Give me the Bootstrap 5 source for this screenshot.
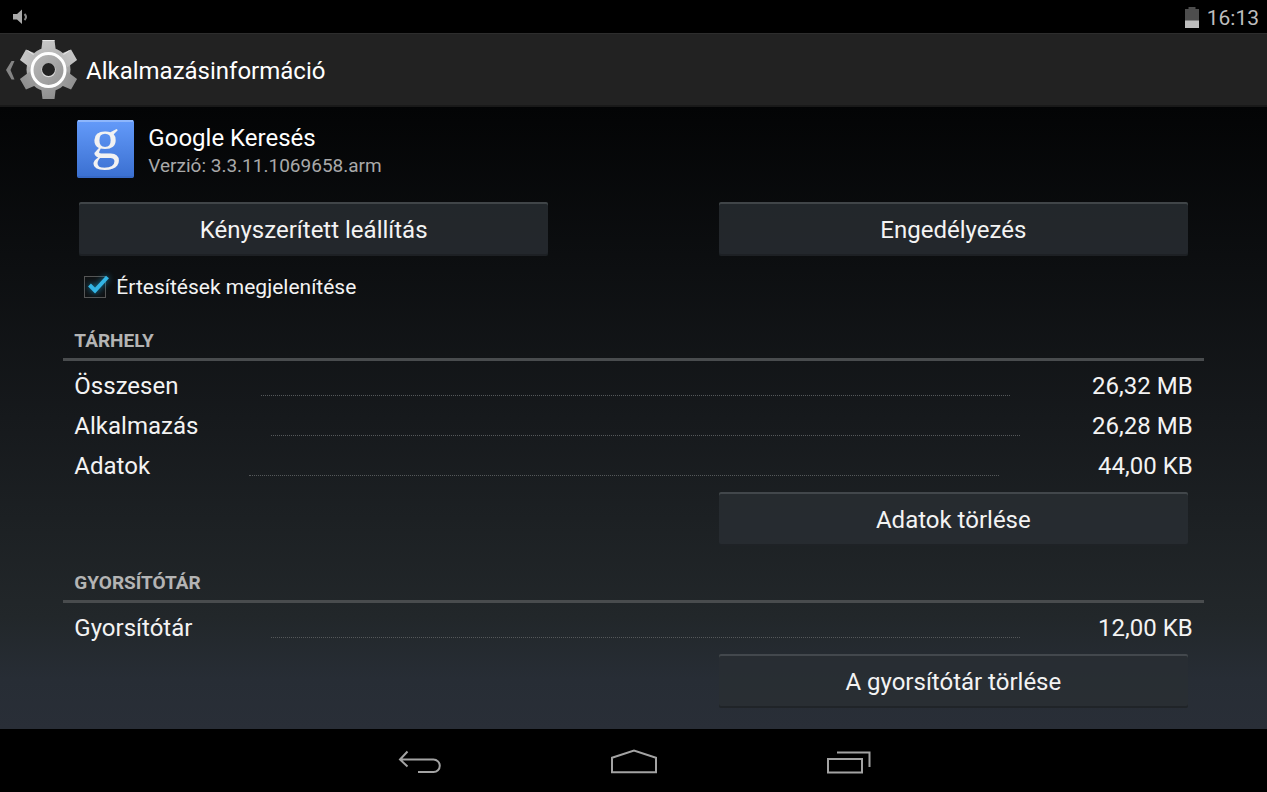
<!DOCTYPE html>
<html lang="hu" data-bs-theme="dark">
<head>
<meta charset="utf-8">
<meta name="viewport" content="width=device-width, initial-scale=1">
<title>Alkalmazásinformáció</title>
<link href="https://cdn.jsdelivr.net/npm/bootstrap@5.3.0/dist/css/bootstrap.min.css" rel="stylesheet">
<style>
  body { font-family: Roboto, "Noto Sans", sans-serif; font-size: 24px; line-height: 32px; color: #f3f3f3; background: #000; }
  button { font-family: inherit; }
  .status-bar { height: 33px; padding: 2px 8px 0 12px; color: #bebebe; font-size: 21px; line-height: 28px; }
  .action-bar { height: 74px; padding-left: 4px; background: #222; border-top: 1px solid #2d2d2d; border-bottom: 2px solid #191919; }
  .up-link { color: inherit; }
  .screen-title { padding: 3px 0 0 8px; font-size: 24px; line-height: 32px; font-weight: 400; }
  .app-main { padding: 13px 5% 21px; background: linear-gradient(#030405, #16191c 50%, #22272a 82%, #272d35 92%, #292e37); }
  .app-head { padding: 0 14px; gap: 14px; }
  .app-name { padding-top: 2px; font-size: 24px; line-height: 32px; font-weight: 400; }
  .app-version { font-size: 19px; line-height: 24px; color: #a9a9a9; }
  .app-icon { overflow: visible; }
  .button-row { padding: 0 16px; gap: 171px; }
  .btn-holo { height: 54px; padding: 2px 0 0; border: 0; border-radius: 2px; color: #f3f3f3; font-size: 24px; line-height: 32px; background: rgba(41,46,51,.8); box-shadow: inset 0 2px rgba(112,118,122,.38), inset 0 -2px rgba(20,22,24,.4); }
  .btn-holo:hover, .btn-holo:active { background: #2e5f70; color: #fff; }
  .check-row { height: 66px; padding: 0 0 4px 21px; gap: 10px; font-size: 21px; }
  .check-box { width: 22px; height: 22px; }
  .check-box input { appearance: none; width: 22px; height: 22px; margin: 0; border: 1px solid #555; background: #101214; }
  .check-box svg { left: 0; top: -4px; pointer-events: none; overflow: visible; filter: drop-shadow(0 0 3px #1784ad); }
  .check-box input:not(:checked) + svg { display: none; }
  .section-title { height: 39px; margin: 0; padding: 3px 11px 0; font-size: 19px; line-height: 32px; font-weight: 700; color: #b4b4b4; border-bottom: 3px solid #494c4e; }
  .size-list { margin: 0; padding: 5px 11px 6px; }
  .size-list dt { font-weight: 400; }
  .size-line { height: 40px; }
  .leader { width: 67%; margin-top: 19px; border-top: 1px dotted #55585a; }
  .section-gap { margin-top: 18px; }
  .nav-keys { height: 63px; background: #000; }
  .nav-keys button { width: 214px; color: #a3a3a3; }
</style>
</head>
<body class="min-vh-100 d-flex flex-column">
  <div class="status-bar d-flex align-items-center justify-content-between">
    <svg width="18" height="18" viewBox="0 0 18 18" aria-hidden="true"><path fill="#aaa" d="M1 5h4l5-4.500v14.500l-5-4.500H1z"/><path d="M12.500 5q3 3 0 6" fill="none" stroke="#888" stroke-width="2"/></svg>
    <div class="d-flex align-items-center gap-2">
      <svg width="14" height="21" viewBox="0 0 14 21" aria-hidden="true"><path fill="#4d4d4d" d="M0 2h3.500V0h7v2H14v12H0z"/><path fill="#bdbdbd" d="M0 13.500h14V21H0z"/></svg>
      <span>16:13</span>
    </div>
  </div>

  <header class="action-bar d-flex align-items-center">
    <a href="#" class="up-link d-flex align-items-center text-decoration-none">
      <svg width="74" height="64" viewBox="4 38 74 64" aria-hidden="true">
        <defs>
          <linearGradient id="metal" gradientUnits="userSpaceOnUse" x1="40" y1="40" x2="56" y2="99"><stop stop-color="#c8c8c8"/><stop offset="1" stop-color="#8e8e8e"/></linearGradient>
          <linearGradient id="disc" x2="1" y2="1"><stop stop-color="#b9b9b9"/><stop offset="1" stop-color="#939393"/></linearGradient>
        </defs>
        <path d="M14.500 61h-3L6 70l5.500 9.500h3L10.500 70z" fill="#858585"/>
        <g fill="url(#metal)">
          <circle cx="48.500" cy="69.500" r="22"/>
          <path d="M42.500 40h12l1.500 12h-15zM42.500 99h12l1.500-12h-15z"/>
          <path d="M42.500 40h12l1.500 12h-15zM42.500 99h12l1.500-12h-15z" transform="rotate(60 48.500 69.500)"/>
          <path d="M42.500 40h12l1.500 12h-15zM42.500 99h12l1.500-12h-15z" transform="rotate(-60 48.500 69.500)"/>
        </g>
        <path d="M42.500 40.500h12M27.500 50.500l6 4M69.500 50.500l-6 4" stroke="#e8e8e8" stroke-width="1" fill="none"/>
        <circle cx="48.500" cy="70" r="16.500" fill="url(#disc)" stroke="#fff" stroke-width="3"/>
        <circle cx="48.500" cy="70.300" r="7" fill="#ddd"/>
        <circle cx="48.500" cy="69.500" r="6.500" fill="#222"/>
      </svg>
      <h1 class="screen-title m-0">Alkalmazásinformáció</h1>
    </a>
  </header>

  <main class="app-main flex-grow-1">
    <div class="app-head d-flex align-items-center">
      <svg class="app-icon" width="57" height="58" viewBox="0 0 57 58" aria-hidden="true">
        <defs><linearGradient id="blue" x2="0" y2="1"><stop stop-color="#649bfa"/><stop offset="1" stop-color="#3a6fd0"/></linearGradient></defs>
        <rect width="57" height="58" rx="2" fill="url(#blue)"/>
        <path d="M1 1h55" stroke="#8db6fc" stroke-width="2"/>
        <path d="M1 57h55" stroke="#3263bb" stroke-width="1"/>
        <text x="14" y="38" font-family="Liberation Serif, serif" font-size="58" fill="#f2f2f2">g</text>
      </svg>
      <div>
        <h2 class="app-name m-0">Google Keresés</h2>
        <div class="app-version">Verzió: 3.3.11.1069658.arm</div>
      </div>
    </div>

    <div class="button-row d-flex mt-4">
      <button type="button" class="btn btn-holo w-100">Kényszerített leállítás</button>
      <button type="button" class="btn btn-holo w-100">Engedélyezés</button>
    </div>

    <div class="check-row d-flex align-items-center">
      <span class="check-box position-relative d-flex">
        <input type="checkbox" id="notify" checked>
        <svg class="position-absolute" width="28" height="24" viewBox="0 0 28 24" aria-hidden="true"><path d="M5.500 13l5.500 5.500L23.500 5" fill="none" stroke="#33b5e5" stroke-width="4"/></svg>
      </span>
      <label for="notify">Értesítések megjelenítése</label>
    </div>

    <section>
      <h3 class="section-title">TÁRHELY</h3>
      <dl class="size-list">
        <div class="size-line d-flex align-items-center justify-content-between"><dt>Összesen</dt><span class="leader"></span><dd class="m-0">26,32 MB</dd></div>
        <div class="size-line d-flex align-items-center justify-content-between"><dt>Alkalmazás</dt><span class="leader"></span><dd class="m-0">26,28 MB</dd></div>
        <div class="size-line d-flex align-items-center justify-content-between"><dt>Adatok</dt><span class="leader"></span><dd class="m-0">44,00 KB</dd></div>
      </dl>
      <div class="button-row d-flex">
        <span class="w-100"></span>
        <button type="button" class="btn btn-holo w-100">Adatok törlése</button>
      </div>
    </section>

    <section class="section-gap">
      <h3 class="section-title">GYORSÍTÓTÁR</h3>
      <dl class="size-list">
        <div class="size-line d-flex align-items-center justify-content-between"><dt>Gyorsítótár</dt><span class="leader"></span><dd class="m-0">12,00 KB</dd></div>
      </dl>
      <div class="button-row d-flex">
        <span class="w-100"></span>
        <button type="button" class="btn btn-holo w-100">A gyorsítótár törlése</button>
      </div>
    </section>
  </main>

  <nav class="nav-keys d-flex justify-content-center" aria-label="Navigáció">
    <button type="button" class="btn p-0 border-0" aria-label="Vissza"><svg width="60" height="40" viewBox="390 741 60 40" fill="none" stroke="currentColor" stroke-width="2"><path d="M407.500 751.500l-7.500 8 7.500 7M400 759.500h33.500a6.300 6.300 0 0 1 0 12.600H418"/></svg></button>
    <button type="button" class="btn p-0 border-0" aria-label="Kezdőképernyő"><svg width="60" height="40" viewBox="603.500 741 60 40" fill="none" stroke="currentColor" stroke-width="2"><path d="M611.500 757.800l22-7.300 22 7.300v14.500h-44z"/></svg></button>
    <button type="button" class="btn p-0 border-0" aria-label="Legutóbbi alkalmazások"><svg width="60" height="40" viewBox="818 741 60 40" fill="none" stroke="currentColor" stroke-width="2"><path d="M828 759h34v13.500h-34zM837 752.500h32.500v14.500"/></svg></button>
  </nav>
<script src="https://cdn.jsdelivr.net/npm/bootstrap@5.3.0/dist/js/bootstrap.bundle.min.js"></script>
</body>
</html>
